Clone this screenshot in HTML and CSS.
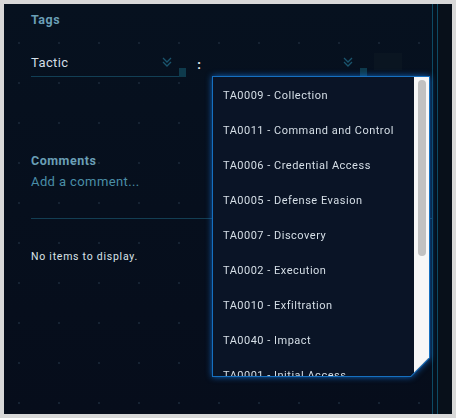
FILE: index.html
```html
<!DOCTYPE html>
<html>
<head>
<meta charset="utf-8">
<link rel="stylesheet" href="styles.css">
</head>
<body>
<div class="screen">
  <div class="main">
    <div class="label tags-label">Tags</div>
    <div class="tag-row">
      <div class="select">
        <span class="select-value">Tactic</span>
        <svg class="chev" width="10" height="10" viewBox="0 0 10 10"><path d="M1 1 L5 5 L9 1 M1 5 L5 9 L9 5"/></svg>
        <span class="handle"></span>
      </div>
      <span class="colon">:</span>
      <div class="select">
        <span class="select-value"></span>
        <svg class="chev" width="10" height="10" viewBox="0 0 10 10"><path d="M1 1 L5 5 L9 1 M1 5 L5 9 L9 5"/></svg>
        <span class="handle"></span>
      </div>
      <div class="add-btn"></div>
    </div>
    <div class="comments">
      <div class="label">Comments</div>
      <div class="add-comment">Add a comment...</div>
    </div>
    <div class="divider"></div>
    <div class="empty">No items to display.</div>

    <div class="dropdown-wrap">
      <div class="dropdown">
        <div class="dropdown-inner">
          <ul class="options">
            <li>TA0009 - Collection</li>
            <li>TA0011 - Command and Control</li>
            <li>TA0006 - Credential Access</li>
            <li>TA0005 - Defense Evasion</li>
            <li>TA0007 - Discovery</li>
            <li>TA0002 - Execution</li>
            <li>TA0010 - Exfiltration</li>
            <li>TA0040 - Impact</li>
            <li>TA0001 - Initial Access</li>
          </ul>
          <div class="scrollbar"><div class="thumb"></div></div>
        </div>
      </div>
    </div>
  </div>
  <div class="rail"></div>
</div>
</body>
</html>
```

FILE: styles.css
```css
html, body {
  margin: 0;
  padding: 0;
  background: #d8d8d8;
}
body {
  width: 456px;
  height: 418px;
  overflow: hidden;
  font-family: Roboto, "Liberation Sans", sans-serif;
}
.screen {
  margin: 4px;
  width: 448px;
  height: 410px;
  display: flex;
  background: #060f1c;
}
.main {
  position: relative;
  width: 428px;
  height: 410px;
  box-sizing: border-box;
  padding: 6px 0 0 27px;
  background-color: #060f1c;
  background-image:
    radial-gradient(circle, #162333 0.9px, transparent 1.3px),
    linear-gradient(to bottom, #06111f, #060d1b);
  background-size: 40px 40px, 100% 100%;
  background-position: -5px 19px, 0 0;
}
.label {
  font-size: 12.5px;
  font-weight: 700;
  color: #6a9fb6;
  letter-spacing: 0.5px;
}
.tags-label {
  line-height: 20px;
}
.tag-row {
  margin-top: 23px;
  display: flex;
  align-items: flex-start;
}
.select {
  position: relative;
  width: 155px;
  height: 18px;
  padding-bottom: 5px;
  border-bottom: 1px solid #123f55;
  display: flex;
  align-items: center;
}
.select-value {
  flex: 1;
  font-size: 13px;
  color: #d3dee6;
  letter-spacing: 0.4px;
}
.chev {
  margin-right: 14px;
  fill: none;
  stroke: #1a546d;
  stroke-width: 1.3;
}
.handle {
  position: absolute;
  right: 0;
  bottom: -1px;
  width: 7px;
  height: 9px;
  background: #0e3a4c;
}
.colon {
  width: 26px;
  text-align: center;
  font-size: 13px;
  font-weight: 700;
  line-height: 24px;
  color: #e4ebef;
}
.add-btn {
  margin-left: 7px;
  width: 28px;
  height: 17px;
  background: #0a1521;
}
.comments {
  margin-top: 75px;
}
.comments .label {
  line-height: 18px;
}
.add-comment {
  font-size: 13px;
  line-height: 24px;
  color: #4a8ea7;
  letter-spacing: 0.4px;
}
.divider {
  margin-top: 24px;
  height: 1px;
  background: #133e53;
}
.empty {
  margin-top: 30px;
  font-size: 10.5px;
  line-height: 16px;
  color: #dbe3e8;
  letter-spacing: 0.75px;
}
.dropdown-wrap {
  position: absolute;
  left: 208px;
  top: 72px;
  width: 218px;
  height: 301px;
  filter: drop-shadow(0 0 3px rgba(16, 112, 214, 0.85));
}
.dropdown {
  width: 100%;
  height: 100%;
  box-sizing: border-box;
  padding: 1px;
  background: #1670c0;
  clip-path: polygon(0 0, 218px 0, 218px 282px, 199px 301px, 0 301px);
}
.dropdown-inner {
  width: 216px;
  height: 299px;
  display: flex;
  background: #0a1426;
  clip-path: polygon(0 0, 216px 0, 216px 280.6px, 197.6px 299px, 0 299px);
}
.options {
  flex: 1;
  margin: 0;
  padding: 1px 0 0 10px;
  list-style: none;
  overflow: hidden;
}
.options li {
  height: 35px;
  line-height: 35px;
  font-size: 11px;
  color: #d6dfe7;
  letter-spacing: 0.5px;
  white-space: nowrap;
}
.scrollbar {
  width: 15px;
  background: #f7f7f7;
  padding: 3px 0 0 4px;
  box-sizing: border-box;
}
.thumb {
  width: 8px;
  height: 176px;
  border-radius: 4px;
  background: #c1c1c1;
}
.rail {
  width: 20px;
  height: 410px;
  box-sizing: border-box;
  border-left: 1px solid #0d4a64;
  background: linear-gradient(to right, #05101c 0 4px, #0d4a64 4px 5px, #08101a 5px);
}
```
